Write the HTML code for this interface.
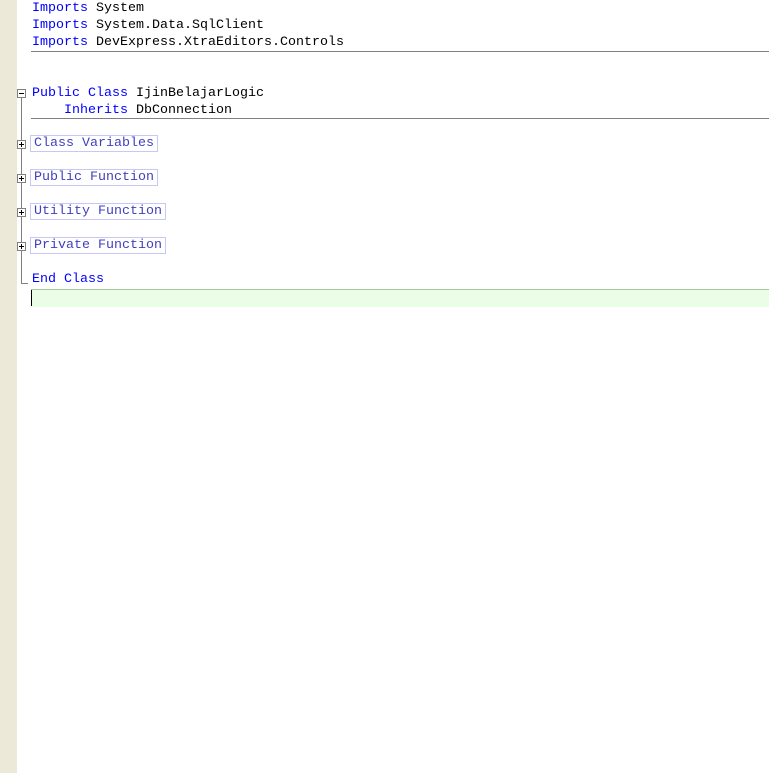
<!DOCTYPE html><html><head><style>
body{margin:0;width:769px;height:773px;background:#fff;position:relative;overflow:hidden;font-family:"Liberation Mono",monospace;font-size:13.33px}
.g{position:absolute;left:0;top:0;width:17px;height:773px;background:#ece9d8}
.l{position:absolute;left:32px;height:17px;line-height:17px;white-space:pre;color:#000}
.k{color:#0000ff}
.hr{position:absolute;left:31px;right:0;height:1px;background:#808080}
.b{position:absolute;left:30px;height:15px;line-height:15px;border:1px solid #c8c8f8;color:#4040c0;padding:0 3px;white-space:pre}
.pm{position:absolute;left:17px;width:7px;height:7px;border:1px solid #808080;background:#fff}
.pm:before{content:"";position:absolute;left:1px;top:3px;width:5px;height:1px;background:#000}
.p:after{content:"";position:absolute;left:3px;top:1px;width:1px;height:5px;background:#000}
</style></head><body>
<div class="g"></div>
<div class="l" style="top:0"><span class="k">Imports</span> System</div>
<div class="l" style="top:17px"><span class="k">Imports</span> System.Data.SqlClient</div>
<div class="l" style="top:34px"><span class="k">Imports</span> DevExpress.XtraEditors.Controls</div>
<div class="hr" style="top:51px"></div>
<div class="l" style="top:85px"><span class="k">Public Class</span> IjinBelajarLogic</div>
<div class="l" style="top:102px">    <span class="k">Inherits</span> DbConnection</div>
<div class="hr" style="top:118px"></div>
<div style="position:absolute;left:21px;top:98px;width:1px;height:185px;background:#808080"></div>
<div style="position:absolute;left:21px;top:283px;width:7px;height:1px;background:#808080"></div>
<div class="pm" style="top:89px"></div>
<div class="pm p" style="top:140px"></div>
<div class="pm p" style="top:174px"></div>
<div class="pm p" style="top:208px"></div>
<div class="pm p" style="top:242px"></div>
<div class="b" style="top:135px">Class Variables</div>
<div class="b" style="top:169px">Public Function</div>
<div class="b" style="top:203px">Utility Function</div>
<div class="b" style="top:237px">Private Function</div>
<div class="l" style="top:271px"><span class="k">End Class</span></div>
<div style="position:absolute;left:31px;right:0;top:289px;height:17px;background:#eafde6;border-top:1px solid #a8c8a0"></div>
<div style="position:absolute;left:31px;top:290px;width:1px;height:16px;background:#000"></div>
</body></html>
